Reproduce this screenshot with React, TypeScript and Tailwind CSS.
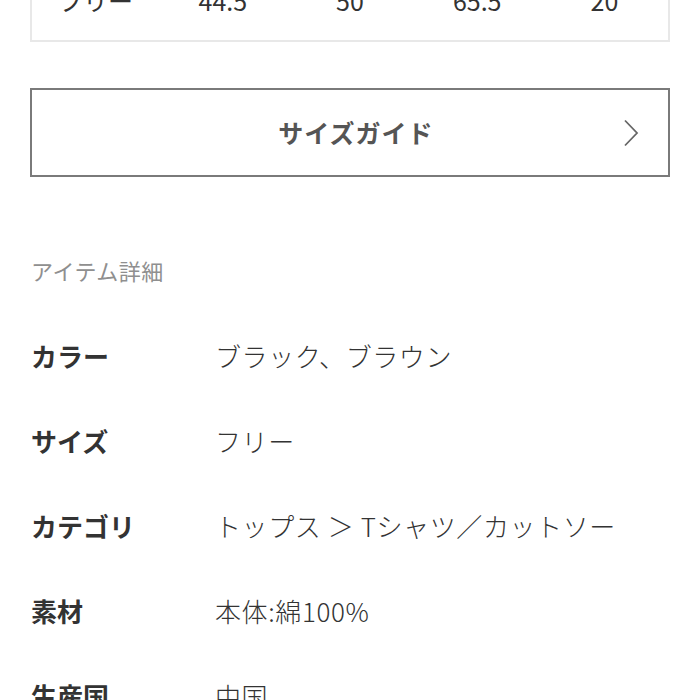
const font = { fontFamily: '"Noto Sans CJK JP", "Noto Sans", sans-serif' };

const sizeRow = ["フリー", "44.5", "50", "65.5", "20"];

const details: [string, string][] = [
  ["カラー", "ブラック、ブラウン"],
  ["サイズ", "フリー"],
  ["カテゴリ", "トップス ＞ Tシャツ／カットソー"],
  ["素材", "本体:綿100%"],
  ["生産国", "中国"],
];

export default function App() {
  return (
    <div className="w-[700px] h-[700px] overflow-hidden bg-white text-[#333]" style={font}>
      {/* size table (cut off at top) */}
      <div className="mx-[30px] -mt-[63px] border-2 border-[#e8e8e8] pt-[43px] pb-[22px]">
        <div className="grid grid-cols-5 text-center text-[25px] leading-[36px] text-[#333]">
          {sizeRow.map((v) => (
            <div key={v}>{v}</div>
          ))}
        </div>
      </div>

      <button
        type="button"
        className="mx-[30px] mt-[46px] flex h-[89px] w-[640px] items-center justify-center relative border-2 border-[#7a7a7a] bg-white pl-[12px]"
      >
        <span className="text-[25px] font-bold text-[#555] tracking-[1px]">サイズガイド</span>
        <svg
          className="absolute right-[29px] top-1/2 -translate-y-1/2"
          width="16"
          height="28"
          viewBox="0 0 16 28"
          fill="none"
          stroke="#666"
          strokeWidth="1.8"
        >
          <path d="M2 1.5 L14 14 L2 26.5" />
        </svg>
      </button>

      <div className="px-[31px]">
        <div className="mt-[78px] text-[22px] leading-[30px] tracking-[0.5px] text-[#8f8f8f]">アイテム詳細</div>
        <div className="mt-[28px]">
          {details.map(([label, value]) => (
            <div key={label} className="flex h-[85px] items-center">
              <div className="w-[184px] shrink-0 text-[26px] font-bold text-[#333]">{label}</div>
              <div className="text-[26px] font-light tracking-[0.6px] text-[#333]">{value}</div>
            </div>
          ))}
        </div>
      </div>
    </div>
  );
}
